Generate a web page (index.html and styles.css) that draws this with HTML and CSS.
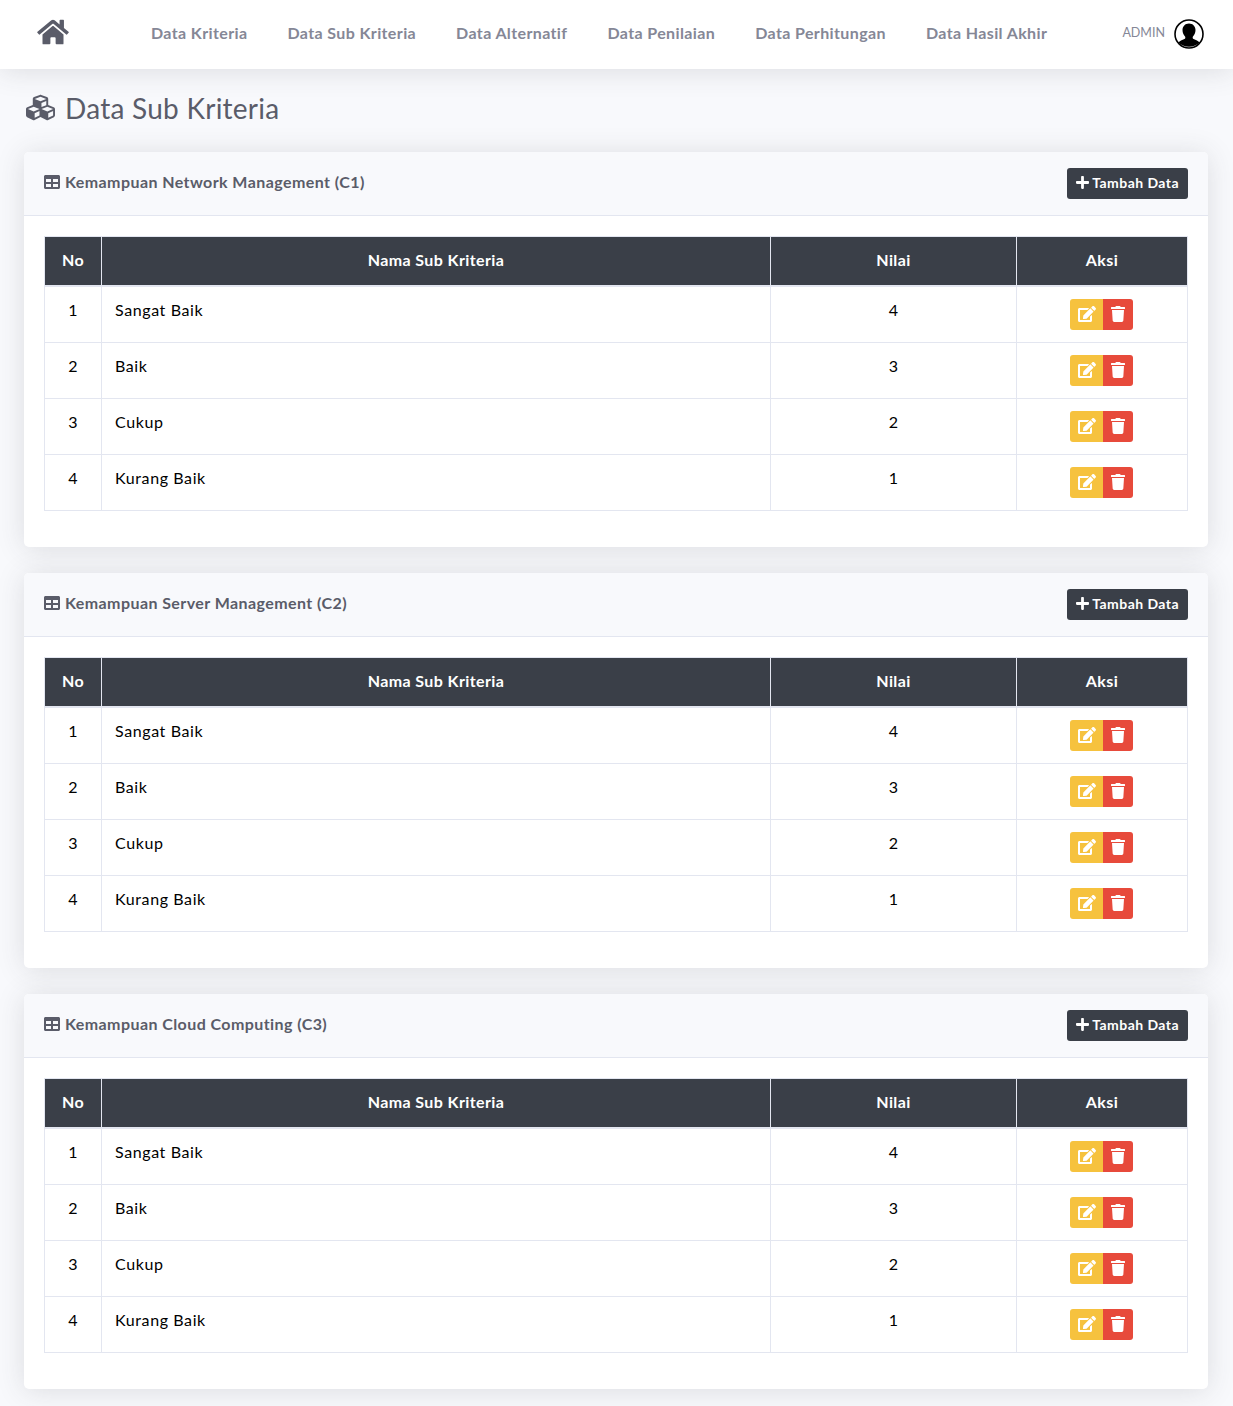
FILE: index.html
```html
<!DOCTYPE html>
<html lang="en">
<head>
    <meta charset="UTF-8">
    <meta name="viewport" content="width=device-width, initial-scale=1.0">
    <title>Data Sub Kriteria</title>
    <link rel="stylesheet" href="styles.css">
</head>
<body>

    <svg class="icon-defs" aria-hidden="true">
        <symbol id="i-home" viewBox="0 0 576 512"><path d="M280.37 148.26L96 300.11V464a16 16 0 0 0 16 16l112.06-.29a16 16 0 0 0 15.92-16V368a16 16 0 0 1 16-16h64a16 16 0 0 1 16 16v95.64a16 16 0 0 0 16 16.05L464 480a16 16 0 0 0 16-16V300L295.67 148.26a12.19 12.19 0 0 0-15.3 0zM571.6 251.47L488 182.56V44.05a12 12 0 0 0-12-12h-56a12 12 0 0 0-12 12v72.61L318.47 43a48 48 0 0 0-61 0L4.34 251.47a12 12 0 0 0-1.6 16.9l25.5 31A12 12 0 0 0 45.15 301l235.22-193.74a12.19 12.19 0 0 1 15.3 0L530.9 301a12 12 0 0 0 16.9-1.6l25.5-31a12 12 0 0 0-1.7-16.93z"/></symbol>
        <symbol id="i-cubes" viewBox="0 0 512 512"><path d="M488.6 250.2L392 214V105.5c0-15-9.3-28.4-23.4-33.7l-100-37.5c-8.1-3.1-17.1-3.1-25.3 0l-100 37.5c-14.1 5.3-23.4 18.7-23.4 33.7V214l-96.6 36.2C9.3 255.5 0 268.9 0 283.9V394c0 13.6 7.7 26.1 19.9 32.2l100 50c10.1 5.1 22.1 5.1 32.2 0l103.9-52 103.9 52c10.1 5.1 22.1 5.1 32.2 0l100-50c12.2-6.1 19.9-18.6 19.9-32.2V283.9c0-15-9.3-28.4-23.4-33.7zM358 214.8l-85 31.9v-68.2l85-37v73.3zM154 104.1l102-38.2 102 38.2v.6l-102 41.4-102-41.4v-.6zm84 291.1l-85 42.5v-79.1l85-38.8v75.4zm0-112l-102 41.4-102-41.4v-.6l102-38.2 102 38.2v.6zm240 112l-85 42.5v-79.1l85-38.8v75.4zm0-112l-102 41.4-102-41.4v-.6l102-38.2 102 38.2v.6z"/></symbol>
        <symbol id="i-table" viewBox="0 0 512 512"><path d="M464 32H48C21.49 32 0 53.49 0 80v352c0 26.51 21.49 48 48 48h416c26.51 0 48-21.49 48-48V80c0-26.51-21.49-48-48-48zM224 416H64v-96h160v96zm0-160H64v-96h160v96zm224 160H288v-96h160v96zm0-160H288v-96h160v96z"/></symbol>
        <symbol id="i-plus" viewBox="0 0 448 512"><path d="M416 208H272V64c0-17.67-14.33-32-32-32h-32c-17.67 0-32 14.33-32 32v144H32c-17.67 0-32 14.33-32 32v32c0 17.67 14.33 32 32 32h144v144c0 17.67 14.33 32 32 32h32c17.67 0 32-14.33 32-32V304h144c17.67 0 32-14.33 32-32v-32c0-17.67-14.33-32-32-32z"/></symbol>
        <symbol id="i-edit" viewBox="0 0 576 512"><path d="M402.6 83.2l90.2 90.2c3.8 3.8 3.8 10 0 13.8L274.4 405.6l-92.8 10.3c-12.4 1.4-22.9-9.1-21.5-21.5l10.3-92.8L388.8 83.2c3.8-3.8 10-3.8 13.8 0zm162-22.9l-48.8-48.8c-15.2-15.2-39.9-15.2-55.2 0l-35.4 35.4c-3.8 3.8-3.8 10 0 13.8l90.2 90.2c3.8 3.8 10 3.8 13.8 0l35.4-35.4c15.2-15.3 15.2-40 0-55.2zM384 346.2V448H64V128h229.8c3.2 0 6.2-1.3 8.5-3.5l40-40c7.6-7.6 2.2-20.5-8.5-20.5H48C21.5 64 0 85.5 0 112v352c0 26.5 21.5 48 48 48h352c26.5 0 48-21.5 48-48V306.2c0-10.7-12.9-16-20.5-8.5l-40 40c-2.2 2.3-3.5 5.3-3.5 8.5z"/></symbol>
        <symbol id="i-trash" viewBox="0 0 448 512"><path d="M432 32H312l-9.4-18.7A24 24 0 0 0 281.1 0H166.8a23.72 23.72 0 0 0-21.4 13.3L136 32H16A16 16 0 0 0 0 48v32a16 16 0 0 0 16 16h416a16 16 0 0 0 16-16V48a16 16 0 0 0-16-16zM53.2 467a48 48 0 0 0 47.9 45h245.8a48 48 0 0 0 47.9-45L416 128H32z"/></symbol>
    </svg>

    <nav class="topbar">
        <a class="brand" href="#"><svg class="icon-home"><use href="#i-home"/></svg></a>
        <ul class="nav-links">
            <li><a href="#">Data Kriteria</a></li>
            <li><a href="#">Data Sub Kriteria</a></li>
            <li><a href="#">Data Alternatif</a></li>
            <li><a href="#">Data Penilaian</a></li>
            <li><a href="#">Data Perhitungan</a></li>
            <li><a href="#">Data Hasil Akhir</a></li>
        </ul>
        <div class="user-box">
            <span class="user-name">ADMIN</span>
            <svg class="avatar" viewBox="0 0 30 30">
                <circle cx="15" cy="15" r="14" fill="#fff" stroke="#000" stroke-width="1.6"/>
                <path d="M15 4.500c-3.900 0-6.500 2.900-6.500 6.600 0 2.700 1.100 5.100 2.700 6.600.3.900.2 1.600-.3 2.100-1.900 1.200-5 1.700-6.400 3.700 2.300 2.600 6.200 4.300 10.500 4.300s8.200-1.700 10.500-4.300c-1.400-2-4.500-2.500-6.400-3.700-.5-.5-.6-1.200-.3-2.100 1.600-1.500 2.700-3.900 2.700-6.600 0-3.700-2.600-6.600-6.500-6.600z"/>
            </svg>
        </div>
    </nav>

    <main class="content">
        <h1 class="page-title"><svg class="icon-cubes"><use href="#i-cubes"/></svg>Data Sub Kriteria</h1>

        <section class="card">
            <header class="card-head">
                <h2 class="card-title"><svg class="icon-table"><use href="#i-table"/></svg>Kemampuan Network Management (C1)</h2>
                <a class="btn-add" href="#"><svg class="icon-plus"><use href="#i-plus"/></svg>Tambah Data</a>
            </header>
            <div class="card-body">
                <table class="data-table">
                    <thead>
                        <tr><th class="col-no">No</th><th class="col-name">Nama Sub Kriteria</th><th class="col-value">Nilai</th><th class="col-action">Aksi</th></tr>
                    </thead>
                    <tbody>
                        <tr><td class="center">1</td><td class="name">Sangat Baik</td><td class="center">4</td><td class="center"><div class="btn-group"><a class="btn-edit" href="#"><svg class="icon-edit"><use href="#i-edit"/></svg></a><a class="btn-delete" href="#"><svg class="icon-trash"><use href="#i-trash"/></svg></a></div></td></tr>
                        <tr><td class="center">2</td><td class="name">Baik</td><td class="center">3</td><td class="center"><div class="btn-group"><a class="btn-edit" href="#"><svg class="icon-edit"><use href="#i-edit"/></svg></a><a class="btn-delete" href="#"><svg class="icon-trash"><use href="#i-trash"/></svg></a></div></td></tr>
                        <tr><td class="center">3</td><td class="name">Cukup</td><td class="center">2</td><td class="center"><div class="btn-group"><a class="btn-edit" href="#"><svg class="icon-edit"><use href="#i-edit"/></svg></a><a class="btn-delete" href="#"><svg class="icon-trash"><use href="#i-trash"/></svg></a></div></td></tr>
                        <tr><td class="center">4</td><td class="name">Kurang Baik</td><td class="center">1</td><td class="center"><div class="btn-group"><a class="btn-edit" href="#"><svg class="icon-edit"><use href="#i-edit"/></svg></a><a class="btn-delete" href="#"><svg class="icon-trash"><use href="#i-trash"/></svg></a></div></td></tr>
                    </tbody>
                </table>
            </div>
        </section>

        <section class="card">
            <header class="card-head">
                <h2 class="card-title"><svg class="icon-table"><use href="#i-table"/></svg>Kemampuan Server Management (C2)</h2>
                <a class="btn-add" href="#"><svg class="icon-plus"><use href="#i-plus"/></svg>Tambah Data</a>
            </header>
            <div class="card-body">
                <table class="data-table">
                    <thead>
                        <tr><th class="col-no">No</th><th class="col-name">Nama Sub Kriteria</th><th class="col-value">Nilai</th><th class="col-action">Aksi</th></tr>
                    </thead>
                    <tbody>
                        <tr><td class="center">1</td><td class="name">Sangat Baik</td><td class="center">4</td><td class="center"><div class="btn-group"><a class="btn-edit" href="#"><svg class="icon-edit"><use href="#i-edit"/></svg></a><a class="btn-delete" href="#"><svg class="icon-trash"><use href="#i-trash"/></svg></a></div></td></tr>
                        <tr><td class="center">2</td><td class="name">Baik</td><td class="center">3</td><td class="center"><div class="btn-group"><a class="btn-edit" href="#"><svg class="icon-edit"><use href="#i-edit"/></svg></a><a class="btn-delete" href="#"><svg class="icon-trash"><use href="#i-trash"/></svg></a></div></td></tr>
                        <tr><td class="center">3</td><td class="name">Cukup</td><td class="center">2</td><td class="center"><div class="btn-group"><a class="btn-edit" href="#"><svg class="icon-edit"><use href="#i-edit"/></svg></a><a class="btn-delete" href="#"><svg class="icon-trash"><use href="#i-trash"/></svg></a></div></td></tr>
                        <tr><td class="center">4</td><td class="name">Kurang Baik</td><td class="center">1</td><td class="center"><div class="btn-group"><a class="btn-edit" href="#"><svg class="icon-edit"><use href="#i-edit"/></svg></a><a class="btn-delete" href="#"><svg class="icon-trash"><use href="#i-trash"/></svg></a></div></td></tr>
                    </tbody>
                </table>
            </div>
        </section>

        <section class="card">
            <header class="card-head">
                <h2 class="card-title"><svg class="icon-table"><use href="#i-table"/></svg>Kemampuan Cloud Computing (C3)</h2>
                <a class="btn-add" href="#"><svg class="icon-plus"><use href="#i-plus"/></svg>Tambah Data</a>
            </header>
            <div class="card-body">
                <table class="data-table">
                    <thead>
                        <tr><th class="col-no">No</th><th class="col-name">Nama Sub Kriteria</th><th class="col-value">Nilai</th><th class="col-action">Aksi</th></tr>
                    </thead>
                    <tbody>
                        <tr><td class="center">1</td><td class="name">Sangat Baik</td><td class="center">4</td><td class="center"><div class="btn-group"><a class="btn-edit" href="#"><svg class="icon-edit"><use href="#i-edit"/></svg></a><a class="btn-delete" href="#"><svg class="icon-trash"><use href="#i-trash"/></svg></a></div></td></tr>
                        <tr><td class="center">2</td><td class="name">Baik</td><td class="center">3</td><td class="center"><div class="btn-group"><a class="btn-edit" href="#"><svg class="icon-edit"><use href="#i-edit"/></svg></a><a class="btn-delete" href="#"><svg class="icon-trash"><use href="#i-trash"/></svg></a></div></td></tr>
                        <tr><td class="center">3</td><td class="name">Cukup</td><td class="center">2</td><td class="center"><div class="btn-group"><a class="btn-edit" href="#"><svg class="icon-edit"><use href="#i-edit"/></svg></a><a class="btn-delete" href="#"><svg class="icon-trash"><use href="#i-trash"/></svg></a></div></td></tr>
                        <tr><td class="center">4</td><td class="name">Kurang Baik</td><td class="center">1</td><td class="center"><div class="btn-group"><a class="btn-edit" href="#"><svg class="icon-edit"><use href="#i-edit"/></svg></a><a class="btn-delete" href="#"><svg class="icon-trash"><use href="#i-trash"/></svg></a></div></td></tr>
                    </tbody>
                </table>
            </div>
        </section>
    </main>

</body>
</html>
```

FILE: styles.css
```css
body {
    font-family: 'Lato', 'Noto Sans', sans-serif;
    margin: 0;
    padding: 0;
    background-color: #f8f9fc;
    color: #5a5c69;
    font-size: 16px;
}

a {
    text-decoration: none;
}

.icon-defs {
    display: none;
}

/* top navigation */
.topbar {
    height: 69px;
    display: flex;
    align-items: center;
    background-color: #fff;
    box-shadow: 0 2px 28px rgba(58, 59, 69, 0.15);
    position: relative;
}

.brand {
    display: flex;
    margin-left: 37px;
    margin-bottom: 5px;
}

.icon-home {
    width: 32px;
    height: 28px;
    fill: #5a5c69;
}

.nav-links {
    display: flex;
    gap: 40px;
    list-style: none;
    margin: 0 0 5px 82px;
    padding: 0;
}

.nav-links a {
    color: #858796;
    font-size: 16px;
    font-weight: 700;
    letter-spacing: 0.38px;
}

.user-box {
    display: flex;
    align-items: center;
    margin-left: auto;
    margin-right: 29px;
    margin-bottom: 2px;
    gap: 9px;
}

.user-name {
    color: #858796;
    font-size: 12.5px;
    margin-bottom: 2px;
}

.avatar {
    width: 30px;
    height: 30px;
}

/* page */
.content {
    padding: 21px 25px 0 24px;
}

.page-title {
    display: flex;
    align-items: center;
    gap: 10px;
    margin: 0 0 27px 2px;
    height: 35px;
    font-size: 28px;
    font-weight: 400;
    letter-spacing: 0.25px;
    color: #5a5c69;
}

.icon-cubes {
    width: 29px;
    height: 29px;
    fill: #5a5c69;
}

.card {
    background-color: #fff;
    border-radius: 5px;
    box-shadow: 0 2px 28px rgba(58, 59, 69, 0.15);
    margin-bottom: 26px;
}

.card-head {
    display: flex;
    justify-content: space-between;
    align-items: center;
    height: 63px;
    padding: 0 20px;
    background-color: #f8f9fc;
    border-bottom: 1px solid #e3e6f0;
    border-radius: 5px 5px 0 0;
}

.card-title {
    display: flex;
    align-items: center;
    gap: 5px;
    margin: 0 0 4px;
    font-size: 16px;
    font-weight: 700;
    letter-spacing: 0.42px;
    color: #5a5c69;
}

.icon-table {
    width: 16px;
    height: 16px;
    fill: #5a5c69;
}

.btn-add {
    display: flex;
    align-items: center;
    gap: 3px;
    height: 31px;
    padding: 0 9px 2px;
    background-color: #3a3f48;
    color: #fff;
    font-size: 14px;
    font-weight: 700;
    letter-spacing: 0.45px;
    border-radius: 3px;
    box-sizing: border-box;
}

.icon-plus {
    width: 13px;
    height: 15px;
    fill: #fff;
}

.card-body {
    padding: 20px 20px 36px;
}

.data-table {
    width: 100%;
    table-layout: fixed;
    border-collapse: collapse;
    color: #000;
    font-size: 16px;
}

.data-table th {
    height: 45px;
    padding: 0 0 3px;
    background-color: #3a3f48;
    color: #fff;
    font-weight: 700;
    letter-spacing: 0.4px;
    text-align: center;
    border: 1px solid #e3e6f0;
    border-bottom-width: 2px;
}

.data-table td {
    height: 55px;
    padding: 12px;
    box-sizing: border-box;
    vertical-align: top;
    line-height: 21px;
    border: 1px solid #e3e6f0;
}

.data-table td.center {
    text-align: center;
}

.data-table td.name {
    padding-left: 13px;
    letter-spacing: 0.6px;
}

.col-no {
    width: 56px;
}

.col-value {
    width: 245px;
}

.col-action {
    width: 170px;
}

.btn-group {
    display: inline-flex;
    vertical-align: top;
    margin-right: 1px;
}

.btn-edit,
.btn-delete {
    display: flex;
    align-items: center;
    justify-content: center;
    height: 31px;
    padding-bottom: 2px;
    box-sizing: border-box;
}

.btn-edit {
    width: 33px;
    background-color: #f6c23e;
    border-radius: 3px 0 0 3px;
}

.btn-delete {
    width: 30px;
    background-color: #e74a3b;
    border-radius: 0 3px 3px 0;
}

.icon-edit {
    width: 18px;
    height: 16px;
    fill: #fff;
}

.icon-trash {
    width: 14px;
    height: 16px;
    fill: #fff;
}
```
